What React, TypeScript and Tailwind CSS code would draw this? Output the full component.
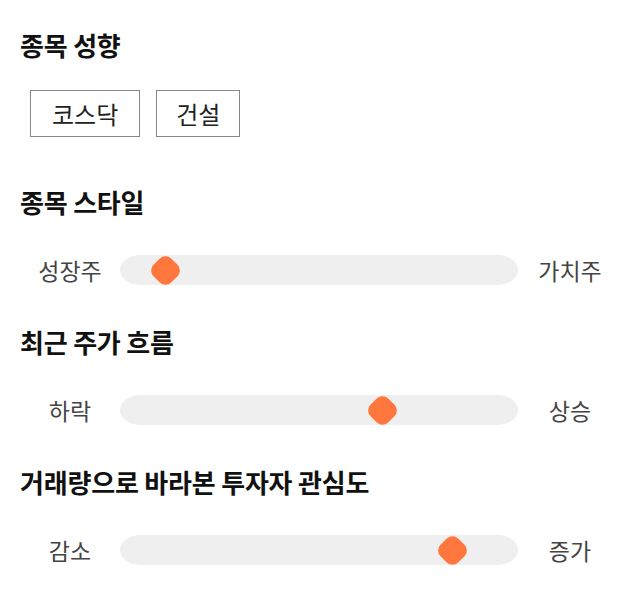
import React from "react";

const font = { fontFamily: '"Noto Sans CJK KR", "Noto Sans", sans-serif' };

function Heading({ children, className = "" }: { children: React.ReactNode; className?: string }) {
  return (
    <h2 className={`text-[26px] font-bold leading-[32px] tracking-[-0.2px] text-[#111] ${className}`}>{children}</h2>
  );
}

function Slider({ left, right, center, className = "" }: { left: string; right: string; center: number; className?: string }) {
  return (
    <div className={`flex items-center ${className}`}>
      <div className="w-[100px] shrink-0 text-center text-[23px] leading-[30px] text-[#444]">{left}</div>
      <div className="relative h-[30px] w-[398px] shrink-0 rounded-[20px/15px] bg-[#efefef]">
        <div
          className="absolute top-[2.5px] h-[25px] w-[25px] rotate-45 rounded-[8px] bg-[#ff773d]"
          style={{ left: `${center - 120 - 12.5}px` }}
        />
      </div>
      <div className="w-[104px] shrink-0 text-center text-[23px] leading-[30px] text-[#444]">{right}</div>
    </div>
  );
}

export default function App() {
  return (
    <div className="min-h-[606px] w-[640px] bg-white pl-5 pt-[29px]" style={font}>
      <Heading>종목 성향</Heading>
      <div className="ml-[10px] mt-[29px] flex gap-4">
        <div className="flex h-[47px] items-center border border-[#888] px-[21px] text-[24px] text-[#222]">코스닥</div>
        <div className="flex h-[47px] items-center border border-[#888] px-[19px] text-[24px] text-[#222]">건설</div>
      </div>
      <Heading className="mt-[49px]">종목 스타일</Heading>
      <Slider className="mt-[37px]" left="성장주" right="가치주" center={165} />
      <Heading className="mt-[41px]">최근 주가 흐름</Heading>
      <Slider className="mt-[37px]" left="하락" right="상승" center={382} />
      <Heading className="mt-[41px]">거래량으로 바라본 투자자 관심도</Heading>
      <Slider className="mt-[37px]" left="감소" right="증가" center={452} />
    </div>
  );
}
